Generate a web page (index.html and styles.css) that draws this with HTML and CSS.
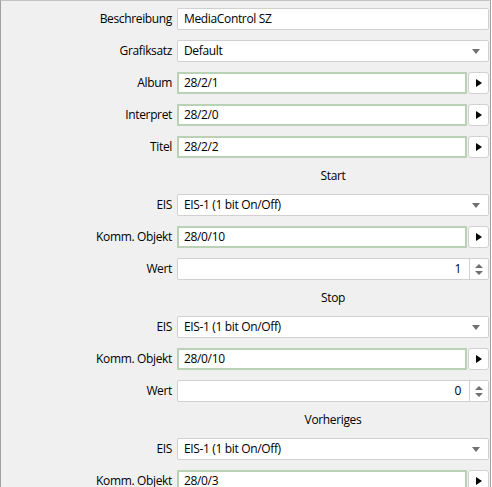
FILE: index.html
```html
<!DOCTYPE html>
<html lang="de">
<head>
    <meta charset="UTF-8">
    <meta name="viewport" content="width=device-width, initial-scale=1.0">
    <title>MediaControl SZ</title>
    <link rel="stylesheet" href="styles.css">
</head>
<body>
    <div class="panel">
        <div class="form">
            <label class="label">Beschreibung</label>
            <div class="edit">MediaControl SZ</div>

            <label class="label">Grafiksatz</label>
            <div class="combo"><span>Default</span><svg class="arrow" width="8" height="5" viewBox="0 0 8 5"><polygon points="0,0 8,0 4,5" /></svg></div>

            <label class="label">Album</label>
            <div class="pick">
                <div class="edit edit-ga">28/2/1</div>
                <button class="play"><svg width="6" height="8" viewBox="0 0 6 8"><polygon points="0,0 6,4 0,8" /></svg></button>
            </div>

            <label class="label">Interpret</label>
            <div class="pick">
                <div class="edit edit-ga">28/2/0</div>
                <button class="play"><svg width="6" height="8" viewBox="0 0 6 8"><polygon points="0,0 6,4 0,8" /></svg></button>
            </div>

            <label class="label">Titel</label>
            <div class="pick">
                <div class="edit edit-ga">28/2/2</div>
                <button class="play"><svg width="6" height="8" viewBox="0 0 6 8"><polygon points="0,0 6,4 0,8" /></svg></button>
            </div>

            <div class="section">Start</div>

            <label class="label">EIS</label>
            <div class="combo"><span>EIS-1 (1 bit On/Off)</span><svg class="arrow" width="8" height="5" viewBox="0 0 8 5"><polygon points="0,0 8,0 4,5" /></svg></div>

            <label class="label">Komm. Objekt</label>
            <div class="pick">
                <div class="edit edit-ga">28/0/10</div>
                <button class="play"><svg width="6" height="8" viewBox="0 0 6 8"><polygon points="0,0 6,4 0,8" /></svg></button>
            </div>

            <label class="label">Wert</label>
            <div class="spin">
                <span class="spin-value">1</span>
                <span class="spin-arrows"><svg width="8" height="11" viewBox="0 0 8 11"><polygon points="4,0 8,4 0,4" /><polygon points="0,7 8,7 4,11" /></svg></span>
            </div>

            <div class="section">Stop</div>

            <label class="label">EIS</label>
            <div class="combo"><span>EIS-1 (1 bit On/Off)</span><svg class="arrow" width="8" height="5" viewBox="0 0 8 5"><polygon points="0,0 8,0 4,5" /></svg></div>

            <label class="label">Komm. Objekt</label>
            <div class="pick">
                <div class="edit edit-ga">28/0/10</div>
                <button class="play"><svg width="6" height="8" viewBox="0 0 6 8"><polygon points="0,0 6,4 0,8" /></svg></button>
            </div>

            <label class="label">Wert</label>
            <div class="spin">
                <span class="spin-value">0</span>
                <span class="spin-arrows"><svg width="8" height="11" viewBox="0 0 8 11"><polygon points="4,0 8,4 0,4" /><polygon points="0,7 8,7 4,11" /></svg></span>
            </div>

            <div class="section">Vorheriges</div>

            <label class="label">EIS</label>
            <div class="combo"><span>EIS-1 (1 bit On/Off)</span><svg class="arrow" width="8" height="5" viewBox="0 0 8 5"><polygon points="0,0 8,0 4,5" /></svg></div>

            <label class="label">Komm. Objekt</label>
            <div class="pick">
                <div class="edit edit-ga">28/0/3</div>
                <button class="play"><svg width="6" height="8" viewBox="0 0 6 8"><polygon points="0,0 6,4 0,8" /></svg></button>
            </div>
        </div>
    </div>
</body>
</html>
```

FILE: styles.css
```css
html, body {
    margin: 0;
    padding: 0;
    height: 487px;
    overflow: hidden;
    background: #fff;
}

body {
    font-family: 'Open Sans', 'Noto Sans', Arial, sans-serif;
    font-size: 12px;
    letter-spacing: -0.35px;
    color: #000;
}

.panel {
    width: 491px;
    box-sizing: border-box;
    border-left: 1px solid #a0a0a0;
    border-top: 1px solid #c4c4c4;
    border-right: 1px solid #a0a0a0;
    background-color: #f0f0f0;
    padding: 7px 1px 20px 0;
    height: 520px;
}

.form {
    display: grid;
    grid-template-columns: 171px 1fr;
    column-gap: 5px;
    row-gap: 10px;
}

.label {
    height: 22px;
    text-align: right;
    line-height: 22px;
    white-space: nowrap;
}

.section {
    grid-column: 2;
    height: 16px;
    line-height: 16px;
    text-align: center;
}

.edit, .combo, .spin {
    box-sizing: border-box;
    height: 22px;
    background: #fff;
    border: 1px solid #d0d0d0;
    border-radius: 2px;
    line-height: 20px;
    padding: 0 6px;
    white-space: nowrap;
    overflow: hidden;
}

.edit-ga {
    border: 2px solid #bad1b5;
    border-radius: 0;
    line-height: 18px;
    padding: 0 5px;
}

.combo {
    display: flex;
    align-items: center;
    justify-content: space-between;
}

.combo .arrow {
    fill: #707070;
    margin-right: 2px;
}

.pick {
    display: flex;
    gap: 1px;
}

.pick .edit {
    flex: 1;
}

.play {
    box-sizing: border-box;
    width: 21px;
    height: 22px;
    padding: 0;
    margin: 0;
    background: #fff;
    border: 1px solid #d0d0d0;
    border-radius: 3px;
    display: flex;
    align-items: center;
    justify-content: center;
}

.play svg {
    fill: #000;
}

.spin {
    display: flex;
    align-items: center;
    padding: 0;
}

.spin-value {
    flex: 1;
    text-align: right;
    padding-right: 8px;
}

.spin-arrows {
    height: 100%;
    width: 18px;
    border-left: 1px solid #d0d0d0;
    display: flex;
    align-items: center;
    justify-content: center;
}

.spin-arrows svg {
    fill: #707070;
}
```
